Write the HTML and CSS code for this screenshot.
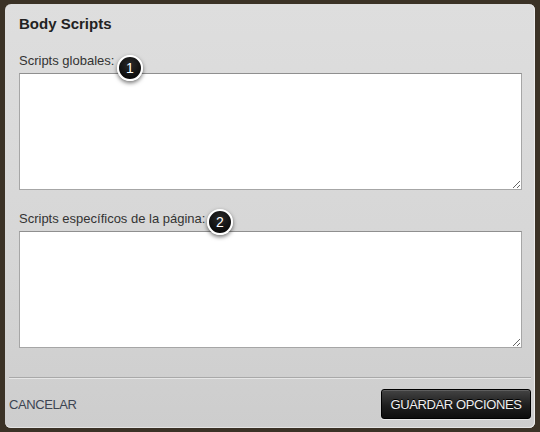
FILE: index.html
```html
<!DOCTYPE html>
<html lang="es">
<head>
<meta charset="utf-8">
<title>Body Scripts</title>
<link rel="stylesheet" href="styles.css">
</head>
<body>
<div class="dialog">
  <h1 class="title">Body Scripts</h1>
  <div class="content">
    <div class="field">
      <label class="label" for="g">Scripts globales:<span class="badge badge-1">1</span></label>
      <textarea id="g" class="box"></textarea>
    </div>
    <div class="field field-2">
      <label class="label" for="p">Scripts específicos de la página:<span class="badge badge-2">2</span></label>
      <textarea id="p" class="box"></textarea>
    </div>
  </div>
  <div class="footer">
    <a class="cancel">CANCELAR</a>
    <button class="save">GUARDAR OPCIONES</button>
  </div>
</div>
</body>
</html>
```
FILE: styles.css
```css
html, body {
  margin: 0;
  padding: 0;
  height: 100%;
}
body {
  background: #3b3226;
  font-family: "Liberation Sans", Arial, sans-serif;
  padding: 4px 5px 0 5px;
  box-sizing: border-box;
}
.dialog {
  width: 530px;
  height: 424px;
  border-radius: 6px;
  background: linear-gradient(#dedede, #d6d6d6 60%, #cdcdcd);
  box-sizing: border-box;
  display: flex;
  flex-direction: column;
  position: relative;
  box-shadow: inset -1px 0 0 #ececec, inset 0 -1px 0 #e4e4e4;
}
.title {
  margin: 0;
  padding: 10px 14px 0;
  font-size: 15px;
  line-height: 20px;
  font-weight: bold;
  color: #222;
}
.content {
  padding: 19px 13px 0 14px;
  display: flex;
  flex-direction: column;
  gap: 21px;
}
.field {
  display: flex;
  flex-direction: column;
  gap: 4px;
}
.label {
  position: relative;
  font-size: 13px;
  line-height: 16px;
  color: #333;
}
.box {
  display: block;
  width: 503px;
  height: 117px;
  box-sizing: border-box;
  margin: 0;
  border: 1px solid #a6a6a6;
  border-top-color: #8f8f8f;
  background: #fff;
  resize: both;
}
.badge {
  position: absolute;
  top: 2px;
  width: 26px;
  height: 26px;
  box-sizing: border-box;
  border: 2px solid #fff;
  border-radius: 50%;
  background: radial-gradient(circle at 50% 35%, #2a2a2a, #000);
  color: #fff;
  font-size: 14px;
  line-height: 22px;
  text-align: center;
  box-shadow: 0 2px 4px rgba(0,0,0,0.55);
}
.badge-1 { left: 98px; }
.badge-2 { left: 188px; top: -2px; }
.footer {
  margin: auto 4px 0;
  border-top: 1px solid #a9a9a9;
  box-shadow: inset 0 1px 0 #e6e6e6;
  padding: 11px 0 9px 0;
  display: flex;
  justify-content: space-between;
  align-items: center;
}
.cancel {
  font-size: 13px;
  color: #3d4452;
  letter-spacing: -0.4px;
}
.save {
  width: 150px;
  height: 30px;
  border: 1px solid #000;
  border-radius: 3px;
  background: linear-gradient(#444, #1e1e1e 55%, #0d0d0d);
  color: #f0f0f0;
  font-family: "Liberation Sans", Arial, sans-serif;
  font-size: 13px;
  letter-spacing: -0.4px;
  text-shadow: 0 -1px 0 #000;
  box-shadow: inset 0 1px 0 rgba(255,255,255,0.15), 0 1px 0 rgba(255,255,255,0.5);
  padding: 0;
}
```
